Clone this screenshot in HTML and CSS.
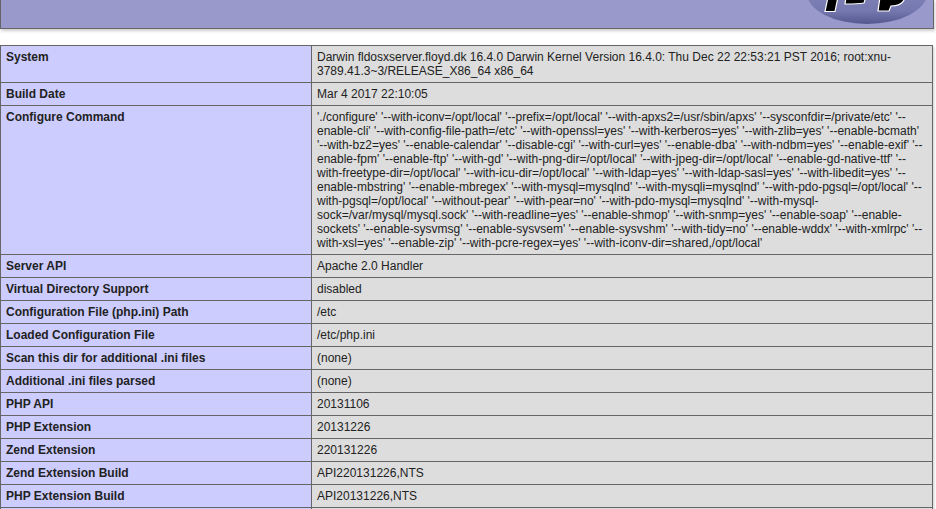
FILE: index.html
```html
<!DOCTYPE html>
<html>
<head>
<meta charset="utf-8">
<title>phpinfo()</title>
<link rel="stylesheet" href="styles.css">
</head>
<body>
<div class="page">
<div class="header">
<svg class="logo" width="124" height="28" viewBox="806 0 124 28"><defs><linearGradient id="g" x1="0" y1="0" x2="0" y2="1"><stop offset="0" stop-color="#9094c6"/><stop offset=".8" stop-color="#7478ae"/><stop offset="1" stop-color="#55588f"/></linearGradient></defs><ellipse cx="867" cy="-8" rx="60.500" ry="32" fill="url(#g)"/><path d="M828 -3 H838 L835 11.500 H825 Z M846 -3 H866 L864 3 C858 4 852 4 845 4 Z M880 -3 H905 C904 3 899 6 891 6 L889 11 H878 Z" fill="#000" stroke="#fff" stroke-width="1.200"/></svg>
</div>
<table class="info">
<tr><td class="e">System</td><td class="v">Darwin fldosxserver.floyd.dk 16.4.0 Darwin Kernel Version 16.4.0: Thu Dec 22 22:53:21 PST 2016; root:xnu-3789.41.3~3/RELEASE_X86_64 x86_64</td></tr>
<tr><td class="e">Build Date</td><td class="v">Mar 4 2017 22:10:05</td></tr>
<tr><td class="e">Configure Command</td><td class="v">'./configure' '--with-iconv=/opt/local' '--prefix=/opt/local' '--with-apxs2=/usr/sbin/apxs' '--sysconfdir=/private/etc' '--enable-cli' '--with-config-file-path=/etc' '--with-openssl=yes' '--with-kerberos=yes' '--with-zlib=yes' '--enable-bcmath' '--with-bz2=yes' '--enable-calendar' '--disable-cgi' '--with-curl=yes' '--enable-dba' '--with-ndbm=yes' '--enable-exif' '--enable-fpm' '--enable-ftp' '--with-gd' '--with-png-dir=/opt/local' '--with-jpeg-dir=/opt/local' '--enable-gd-native-ttf' '--with-freetype-dir=/opt/local' '--with-icu-dir=/opt/local' '--with-ldap=yes' '--with-ldap-sasl=yes' '--with-libedit=yes' '--enable-mbstring' '--enable-mbregex' '--with-mysql=mysqlnd' '--with-mysqli=mysqlnd' '--with-pdo-pgsql=/opt/local' '--with-pgsql=/opt/local' '--without-pear' '--with-pear=no' '--with-pdo-mysql=mysqlnd' '--with-mysql-sock=/var/mysql/mysql.sock' '--with-readline=yes' '--enable-shmop' '--with-snmp=yes' '--enable-soap' '--enable-sockets' '--enable-sysvmsg' '--enable-sysvsem' '--enable-sysvshm' '--with-tidy=no' '--enable-wddx' '--with-xmlrpc' '--with-xsl=yes' '--enable-zip' '--with-pcre-regex=yes' '--with-iconv-dir=shared,/opt/local'</td></tr>
<tr><td class="e">Server API</td><td class="v">Apache 2.0 Handler</td></tr>
<tr><td class="e">Virtual Directory Support</td><td class="v">disabled</td></tr>
<tr><td class="e">Configuration File (php.ini) Path</td><td class="v">/etc</td></tr>
<tr><td class="e">Loaded Configuration File</td><td class="v">/etc/php.ini</td></tr>
<tr><td class="e">Scan this dir for additional .ini files</td><td class="v">(none)</td></tr>
<tr><td class="e">Additional .ini files parsed</td><td class="v">(none)</td></tr>
<tr><td class="e">PHP API</td><td class="v">20131106</td></tr>
<tr><td class="e">PHP Extension</td><td class="v">20131226</td></tr>
<tr><td class="e">Zend Extension</td><td class="v">220131226</td></tr>
<tr><td class="e">Zend Extension Build</td><td class="v">API220131226,NTS</td></tr>
<tr><td class="e">PHP Extension Build</td><td class="v">API20131226,NTS</td></tr>
<tr class="blank"><td class="e"></td><td class="v"></td></tr>
</table>
</div>
</body>
</html>
```
FILE: styles.css
```css
html, body { margin: 0; padding: 0; background: #fff; overflow: hidden; height: 509px; }
body { font-family: "Liberation Sans", Arial, sans-serif; font-size: 12px; color: #222; }
.page { width: 934px; margin-top: -1px; }
.header { height: 28px; background: #9999cc; border: 1px solid #666; box-shadow: 1px 2px 3px #ccc; margin-bottom: 16px; overflow: hidden; position: relative; }
.logo { position: absolute; right: 3px; top: 0; }
.info { border-collapse: collapse; width: 933px; table-layout: fixed; box-shadow: 1px 2px 3px #ccc; }
.info td { border: 1px solid #666; padding: 4px 5px; vertical-align: baseline; line-height: 14px; }
.blank { height: 23px; }
.e { width: 300px; background: #ccccff; font-weight: bold; color: #222; }
.v { background: #dddddd; overflow-wrap: break-word; }
```
